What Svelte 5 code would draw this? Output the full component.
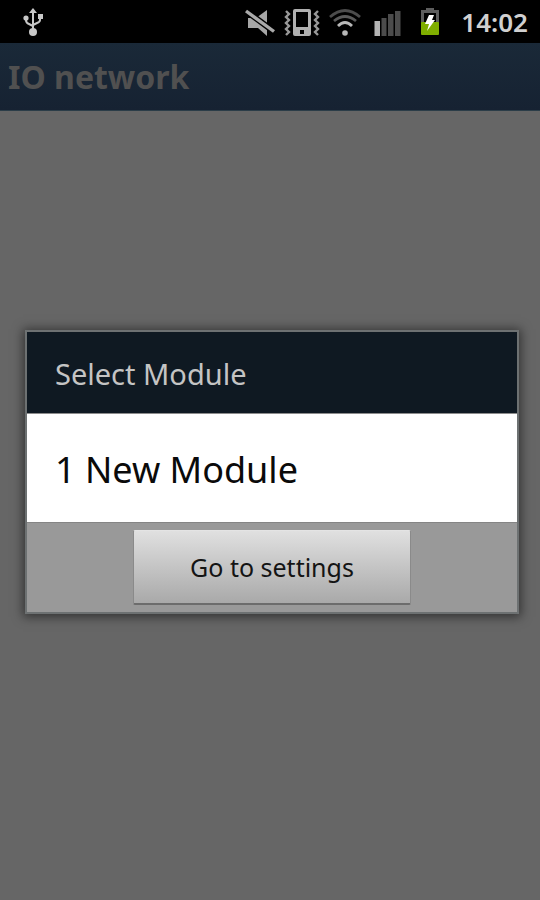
<script>
    const title = 'IO network';
    const time = '14:02';

    let modules = $state([
        { id: 1, name: 'New Module' }
    ]);

    let selected = $state(null);

    function selectModule(id) {
        selected = id;
    }

    function goToSettings() {
        selected = null;
    }
</script>

<div class="screen">
    <header class="status-bar">
        <!-- usb -->
        <svg class="usb" width="20" height="28" viewBox="0 0 20 28">
            <g fill="none" stroke="#c8c8c8" stroke-width="2">
                <path d="M10 4V23" />
                <path d="M3 10V12Q3 15 6 16L10 18" />
                <path d="M17 9V12Q17 14 14 15L10 17" />
            </g>
            <g fill="#c8c8c8">
                <path d="M10 0L14 5H6Z" />
                <circle cx="3" cy="10" r="2.6" />
                <rect x="15" y="6" width="5" height="5" />
                <circle cx="10" cy="24" r="4" />
            </g>
        </svg>

        <div class="icons">
            <!-- muted -->
            <svg width="32" height="28" viewBox="0 0 32 28">
                <path d="M4 10H12L23 2V28L14 20H4Z" fill="#a6a6a6" />
                <path d="M0 1.5L32 25" stroke="#000" stroke-width="6" />
                <path d="M2 3L30 23.5" stroke="#aaa" stroke-width="3.4" />
            </svg>
            <!-- vibrate -->
            <svg class="vibrate" width="36" height="28" viewBox="0 0 36 28">
                <path
                    d="M11 1H25Q27 1 27 3V26Q27 28 25 28H11Q9 28 9 26V3Q9 1 11 1ZM12 4V19H24V4ZM16 22V26H20V22Z"
                    fill="#b0b0b0"
                    fill-rule="evenodd"
                />
                <g fill="none" stroke="#999" stroke-width="2.4">
                    <path d="M2 3L5 6L2 9L5 12L2 15L5 18L2 21L5 24L2 27" />
                    <path d="M34 3L31 6L34 9L31 12L34 15L31 18L34 21L31 24L34 27" />
                </g>
            </svg>
            <!-- wifi -->
            <svg class="wifi" width="34" height="28" viewBox="0 0 34 28">
                <g fill="none" stroke-width="2.8">
                    <path d="M2 9Q17 -4 32 9" stroke="#4c4c4c" />
                    <path d="M6 13Q17 4 28 13" stroke="#5a5a5a" />
                    <path d="M10 18Q17 11 24 18" stroke="#b8b8b8" />
                </g>
                <circle cx="17" cy="25" r="2.8" fill="#b8b8b8" />
            </svg>
            <!-- signal -->
            <svg class="signal" width="28" height="28" viewBox="0 0 28 28">
                <rect x="0.5" y="13" width="5.5" height="15" fill="#b4b4b4" />
                <rect x="7.5" y="10" width="5" height="18" fill="#4c4c4c" />
                <rect x="14" y="6" width="5.5" height="22" fill="#4c4c4c" />
                <rect x="21" y="3" width="5.5" height="25" fill="#4c4c4c" />
            </svg>
            <!-- battery -->
            <svg class="battery" width="20" height="28" viewBox="0 0 20 28">
                <path d="M6 2V0H14V2H19V15H16V5H4V15H1V2Z" fill="#5e5e5e" />
                <rect x="1" y="14" width="18" height="13" rx="1" fill="#7fae00" />
                <path d="M9 7H14L12 12H15L7 23L9 16H5Z" fill="#fff" />
            </svg>
            <time>{time}</time>
        </div>
    </header>

    <div class="title-bar">
        <h1>{title}</h1>
    </div>

    <main>
        <div class="dialog" role="dialog" aria-labelledby="dialog-title">
            <h2 id="dialog-title">Select Module</h2>
            <ul>
                {#each modules as module (module.id)}
                    <li>
                        <button class="item" onclick={() => selectModule(module.id)}>
                            {module.id} {module.name}
                        </button>
                    </li>
                {/each}
            </ul>
            <div class="actions">
                <button class="settings" onclick={goToSettings}>Go to settings</button>
            </div>
        </div>
    </main>
</div>

<style>
    :global(body) {
        margin: 0;
        background: #666;
    }

    .screen {
        display: flex;
        flex-direction: column;
        min-height: 100vh;
        position: relative;
        background: #666;
        font-family: "Noto Sans", "Open Sans", sans-serif;
    }

    .status-bar {
        display: flex;
        align-items: center;
        justify-content: space-between;
        height: 43px;
        padding: 0 12px 0 23px;
        background: #000;
    }

    .icons {
        display: flex;
        align-items: center;
    }

    .vibrate {
        margin-left: 8px;
    }

    .wifi {
        margin-left: 8px;
    }

    .signal {
        margin-left: 12px;
    }

    .battery {
        margin-left: 18px;
    }

    time {
        margin-left: 21px;
        color: #d0d0d0;
        font-size: 26px;
        font-weight: 600;
        line-height: 40px;
    }

    .title-bar {
        box-sizing: border-box;
        height: 68px;
        padding: 0 8px;
        background: linear-gradient(#1a2938, #162232);
        border-bottom: 1px solid #2b3d48;
    }

    h1 {
        margin: 0;
        color: #505050;
        font-size: 32px;
        font-weight: 700;
        line-height: 68px;
    }

    /* the dialog lies over the whole area below the status bar */
    main {
        position: absolute;
        inset: 43px 0 0;
        display: flex;
        align-items: center;
        padding: 0 21px 0 25px;
    }

    .dialog {
        flex: 1;
        border: 2px solid #6d7172;
        box-shadow: 0 1px 10px 2px rgba(0, 0, 0, 0.5);
    }

    h2 {
        margin: 0;
        padding: 3px 28px 0;
        background: #0f1922;
        color: #c4c4c4;
        font-size: 29px;
        font-weight: 400;
        line-height: 78px;
    }

    ul {
        margin: 0;
        padding: 0;
        list-style: none;
        background: #fff;
        border-top: 1px solid #8c8c8c;
    }

    .item {
        display: block;
        width: 100%;
        padding: 4px 28px 0;
        border: none;
        background: #fff;
        color: #0a0a0a;
        font-family: inherit;
        font-size: 36px;
        line-height: 104px;
        text-align: left;
    }

    .actions {
        display: flex;
        justify-content: center;
        padding: 7px;
        background: #999;
        border-top: 1px solid #858585;
    }

    .settings {
        width: 278px;
        height: 75px;
        padding: 0;
        border: 1px solid #8a8a8a;
        border-top-color: #e4e4e4;
        border-bottom: 2px solid #6c6c6c;
        border-radius: 2px;
        background: linear-gradient(#e0e0e0, #a9a9a9);
        color: #141414;
        font-family: inherit;
        font-size: 25px;
    }
</style>
